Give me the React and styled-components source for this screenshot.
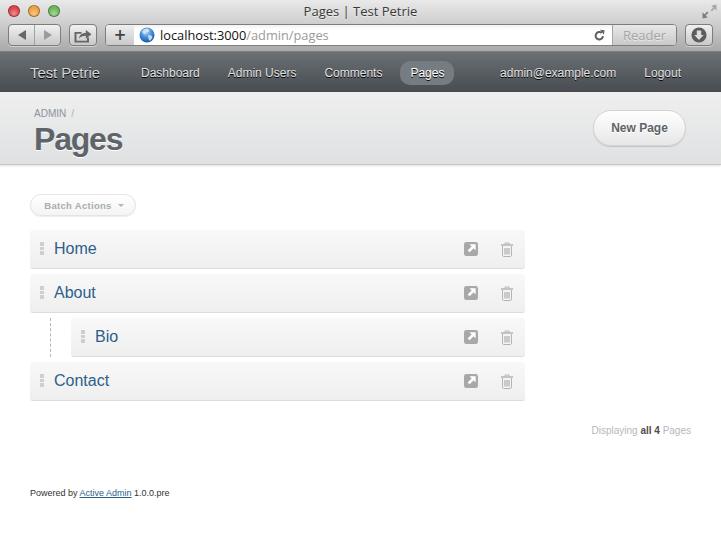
import React from "react";
import styled, { createGlobalStyle } from "styled-components";

const GlobalStyle = createGlobalStyle`
    html, body {
        margin: 0;
        padding: 0;
        background: #fff;
        font-family: "Liberation Sans", Arial, sans-serif;
    }
`;

const pages = [
    { title: "Home", nested: false },
    { title: "About", nested: false },
    { title: "Bio", nested: true },
    { title: "Contact", nested: false },
];

const ShareIcon = () => (
    <svg width="20" height="15" viewBox="0 0 20 15">
        <path d="M1.500 4h7v1.800h-5v7h10.500V9.500h2V14.500H1.500z" fill="#666" />
        <path d="M6 10.500c.3-3.600 2.800-5.500 6.800-5.600V2l5.700 4.300-5.700 4.400V7.800c-3 0-5 .8-6.800 2.700z" fill="#666" />
    </svg>
);

const Globe = () => (
    <svg width="16" height="16" viewBox="0 0 16 16">
        <defs>
            <radialGradient id="globe" cx="45%" cy="30%" r="75%">
                <stop offset="0" stopColor="#a8d4f7" />
                <stop offset="0.55" stopColor="#3a87d6" />
                <stop offset="1" stopColor="#124f9e" />
            </radialGradient>
        </defs>
        <circle cx="8" cy="8" r="7.500" fill="url(#globe)" />
        <path d="M5 2.500l3-1 2.500 1.500-1 2-2.500.5-.5 2-2.500-1-1-2zM9 8l3.500.5 1 2-2.500 3.500-1.500-2z" fill="#dfe8ee" opacity="0.85" />
    </svg>
);

const ReloadIcon = () => (
    <svg width="13" height="13" viewBox="0 0 13 13">
        <path d="M10 7.200a3.700 3.700 0 1 1-1.300-3.300" fill="none" stroke="#606060" strokeWidth="2" />
        <path d="M7 .8l4.500.4-.5 4.600z" fill="#606060" />
    </svg>
);

const DownloadIcon = () => (
    <svg width="16" height="16" viewBox="0 0 18 18">
        <circle cx="9" cy="9" r="8.500" fill="#5c5c5c" />
        <path d="M6.500 4h5v5h2.800L9 14.500 3.700 9h2.800z" fill="#dcdcdc" />
    </svg>
);

const FullscreenIcon = () => (
    <svg width="15" height="15" viewBox="0 0 15 15">
        <path d="M14.500 .5v6.200l-2-2-2.700 2.700-1.200-1.200 2.700-2.700-2-2z" fill="#a8a8a8" />
        <path d="M.5 14.500V8.300l2 2 2.700-2.700 1.200 1.200-2.700 2.700 2 2z" fill="#7f7f7f" />
    </svg>
);

const ViewIcon = () => (
    <svg width="14" height="14" viewBox="0 0 15 15">
        <rect width="15" height="15" rx="2.500" fill="#a8a8a8" />
        <path d="M12.500 2.500V9l-2.200-2.200-4.300 4.300-2.100-2.100 4.300-4.300L6 2.500z" fill="#fff" />
    </svg>
);

const TrashIcon = () => (
    <svg width="14" height="15" viewBox="0 0 14 15">
        <path d="M5 2.500V1h4v1.500" fill="none" stroke="#b4b4b4" />
        <path d="M1 3h12" stroke="#b4b4b4" strokeWidth="1.500" />
        <path d="M2.500 4v9.200c0 .7.500 1.300 1.200 1.300h6.600c.7 0 1.200-.6 1.200-1.300V4" fill="#f4f4f4" stroke="#b4b4b4" />
        <path d="M5 6v6.500M7 6v6.500M9 6v6.500" stroke="#adadad" strokeWidth="1.200" />
    </svg>
);

const App = () => {
    return (
        <>
            <GlobalStyle />
            <Page>
                <Chrome>
                    <TitleRow>
                        <Lights>
                            <Light $color="#e0444a" />
                            <Light $color="#eea33f" />
                            <Light $color="#6cb85a" />
                        </Lights>
                        <WindowTitle>Pages | Test Petrie</WindowTitle>
                        <FullscreenSlot>
                            <FullscreenIcon />
                        </FullscreenSlot>
                    </TitleRow>
                    <ToolRow>
                        <ToolButton $width={53}>
                            <Arrow $dir="left" />
                            <ToolDivider />
                            <Arrow $dir="right" $dim />
                        </ToolButton>
                        <ToolButton $width={28}>
                            <ShareIcon />
                        </ToolButton>
                        <AddressBar>
                            <PlusCell>+</PlusCell>
                            <UrlField>
                                <Globe />
                                <Url>
                                    localhost:3000<UrlPath>/admin/pages</UrlPath>
                                </Url>
                                <ReloadSlot>
                                    <ReloadIcon />
                                </ReloadSlot>
                            </UrlField>
                            <ReaderCell>Reader</ReaderCell>
                        </AddressBar>
                        <ToolButton $width={28}>
                            <DownloadIcon />
                        </ToolButton>
                    </ToolRow>
                </Chrome>

                <NavBar>
                    <SiteTitle>Test Petrie</SiteTitle>
                    <NavLinks>
                        <NavLink>Dashboard</NavLink>
                        <NavLink>Admin Users</NavLink>
                        <NavLink>Comments</NavLink>
                        <NavLink $active>Pages</NavLink>
                    </NavLinks>
                    <NavRight>
                        <NavLink>admin@example.com</NavLink>
                        <NavLink>Logout</NavLink>
                    </NavRight>
                </NavBar>

                <TitleBar>
                    <TitleText>
                        <Breadcrumb>
                            ADMIN<Slash>/</Slash>
                        </Breadcrumb>
                        <PageTitle>Pages</PageTitle>
                    </TitleText>
                    <NewPage>New Page</NewPage>
                </TitleBar>

                <Content>
                    <BatchButton>
                        Batch Actions
                        <Caret />
                    </BatchButton>
                    <Tree>
                        {pages.map((p) => (
                            <TreeRow key={p.title} $nested={p.nested}>
                                {p.nested && <Dashed />}
                                <Item>
                                    <Handle>
                                        <Dot />
                                        <Dot />
                                        <Dot />
                                    </Handle>
                                    <ItemLabel>{p.title}</ItemLabel>
                                    <ItemActions>
                                        <ViewIcon />
                                        <TrashIcon />
                                    </ItemActions>
                                </Item>
                            </TreeRow>
                        ))}
                    </Tree>
                    <Pagination>
                        Displaying <b>all 4</b> Pages
                    </Pagination>
                </Content>

                <Footer>
                    Powered by <FooterLink href="#">Active Admin</FooterLink> 1.0.0.pre
                </Footer>
            </Page>
        </>
    );
};
export default App;

const Page = styled.div`
    width: 721px;
    height: 545px;
    overflow: hidden;
    background: #fff;
`;

const Chrome = styled.div`
    height: 52px;
    box-sizing: border-box;
    background: linear-gradient(#e9e9e9 0%, #d2d2d2 40%, #a9a9a9 100%);
    border-bottom: 1px solid #7f7f7f;
`;

const TitleRow = styled.div`
    height: 22px;
    display: grid;
    grid-template-columns: 1fr auto 1fr;
    align-items: center;
`;

const Lights = styled.div`
    display: flex;
    gap: 8px;
    padding-left: 8px;
`;

const Light = styled.span`
    width: 12px;
    height: 12px;
    border-radius: 50%;
    box-sizing: border-box;
    border: 1px solid rgba(0, 0, 0, 0.35);
    background: radial-gradient(circle at 50% 75%, #fff6 0%, transparent 60%), ${(p) => p.$color};
`;

const WindowTitle = styled.div`
    font-family: "Open Sans", "Noto Sans", sans-serif;
    font-size: 13px;
    color: #3a3a3a;
    text-shadow: 0 1px 0 rgba(255, 255, 255, 0.5);
`;

const FullscreenSlot = styled.div`
    display: flex;
    justify-content: flex-end;
    padding-right: 4px;
`;

const ToolRow = styled.div`
    height: 24px;
    display: flex;
    gap: 8px;
    padding: 2px 8px 0;
`;

const ToolButton = styled.div`
    width: ${(p) => p.$width}px;
    height: 22px;
    flex: none;
    display: flex;
    align-items: center;
    justify-content: center;
    box-sizing: border-box;
    border: 1px solid #7d7d7d;
    border-radius: 4px;
    background: linear-gradient(#f0f0f0, #c9c9c9);
    box-shadow: 0 1px 0 rgba(255, 255, 255, 0.4);
`;

const Arrow = styled.span`
    flex: 1;
    display: flex;
    justify-content: center;
    &::before {
        content: "";
        border-top: 5px solid transparent;
        border-bottom: 5px solid transparent;
        ${(p) => (p.$dir === "left" ? "border-right" : "border-left")}: 8px solid ${(p) => (p.$dim ? "#9b9b9b" : "#666")};
    }
`;

const ToolDivider = styled.span`
    width: 1px;
    height: 100%;
    background: #a2a2a2;
`;

const AddressBar = styled.div`
    flex: 1;
    height: 22px;
    display: flex;
    box-sizing: border-box;
    border: 1px solid #7d7d7d;
    border-radius: 4px;
    overflow: hidden;
    background: #fff;
`;

const PlusCell = styled.div`
    width: 28px;
    flex: none;
    display: flex;
    align-items: center;
    justify-content: center;
    background: linear-gradient(#f0f0f0, #c9c9c9);
    font-family: "DejaVu Sans", sans-serif;
    font-weight: 700;
    font-size: 15px;
    line-height: 1;
    color: #444;
`;

const UrlField = styled.div`
    flex: 1;
    display: flex;
    align-items: center;
    gap: 5px;
    padding: 0 5px 0 5px;
    background: linear-gradient(#f2f2f2, #fff 25%);
`;

const Url = styled.span`
    flex: 1;
    font-family: "Open Sans", "Noto Sans", sans-serif;
    font-size: 12.800px;
    color: #111;
`;

const UrlPath = styled.span`
    color: #9a9a9a;
`;

const ReloadSlot = styled.span`
    display: flex;
    padding-right: 1px;
`;

const ReaderCell = styled.div`
    width: 64px;
    flex: none;
    display: flex;
    align-items: center;
    justify-content: center;
    box-sizing: border-box;
    border-left: 1px solid #a5a5a5;
    background: linear-gradient(#e8e8e8, #c9c9c9);
    font-family: "Open Sans", "Noto Sans", sans-serif;
    font-size: 13px;
    color: #a5a5a5;
    text-shadow: 0 1px 0 rgba(255, 255, 255, 0.5);
`;

const NavBar = styled.div`
    height: 40px;
    display: flex;
    align-items: center;
    box-sizing: border-box;
    padding: 2px 26px 0 30px;
    background: linear-gradient(#6a7074, #484c50);
    text-shadow: 0 1px 0 #000;
`;

const SiteTitle = styled.div`
    font-size: 14.800px;
    color: #d4d6d7;
    width: 97px;
`;

const NavLinks = styled.div`
    display: flex;
    align-items: center;
    flex: 1;
`;

const NavRight = styled.div`
    display: flex;
    align-items: center;
`;

const NavLink = styled.span`
    height: 24px;
    display: flex;
    align-items: center;
    padding: 0 10px;
    margin: 0 4px;
    border-radius: 10px;
    font-size: 12px;
    color: ${(p) => (p.$active ? "#fff" : "#e2e3e4")};
    background: ${(p) => (p.$active ? "#767d82" : "transparent")};
`;

const TitleBar = styled.div`
    height: 73px;
    box-sizing: border-box;
    padding: 0 35px 0 34px;
    display: flex;
    align-items: center;
    justify-content: space-between;
    background: linear-gradient(#efefef, #dfe1e2);
    border-bottom: 1px solid #c8c8c8;
    box-shadow: 0 1px 2px rgba(0, 0, 0, 0.12);
`;

const TitleText = styled.div`
    margin-top: 7px;
`;

const Breadcrumb = styled.div`
    font-size: 10px;
    line-height: 12px;
    color: #8a929b;
    margin-top: 2px;
`;

const Slash = styled.span`
    margin-left: 5px;
    color: #aab0b6;
`;

const PageTitle = styled.h1`
    margin: 1px 0 0;
    font-size: 32px;
    line-height: 36px;
    font-weight: 700;
    letter-spacing: -1.200px;
    color: #5e6469;
    text-shadow: 0 1px 0 #fff;
`;

const NewPage = styled.div`
    width: 93px;
    height: 36px;
    display: flex;
    align-items: center;
    justify-content: center;
    box-sizing: border-box;
    border: 1px solid #d3d3d3;
    border-radius: 18px;
    background: linear-gradient(#fff, #e7e7e7);
    box-shadow: 0 1px 1px rgba(0, 0, 0, 0.15);
    font-size: 12px;
    font-weight: 700;
    color: #5e6469;
    text-shadow: 0 1px 0 #fff;
`;

const Content = styled.div`
    padding: 29px 30px 0;
`;

const BatchButton = styled.div`
    width: 106px;
    height: 22px;
    display: flex;
    align-items: center;
    justify-content: center;
    gap: 6px;
    box-sizing: border-box;
    border: 1px solid #e4e4e4;
    border-radius: 11px;
    padding-left: 2px;
    background: linear-gradient(#fff, #f4f4f4);
    box-shadow: 0 1px 1px rgba(0, 0, 0, 0.07);
    font-size: 9.500px;
    font-weight: 700;
    letter-spacing: 0.300px;
    color: #a9adb1;
`;

const Caret = styled.span`
    border-left: 3px solid transparent;
    border-right: 3px solid transparent;
    border-top: 3px solid #b6b6b6;
`;

const Tree = styled.div`
    width: 495px;
    margin-top: 14px;
    display: flex;
    flex-direction: column;
    gap: 5px;
`;

const TreeRow = styled.div`
    display: flex;
    padding-left: ${(p) => (p.$nested ? "20px" : "0")};
    gap: 20px;
`;

const Dashed = styled.span`
    width: 0;
    height: 39px;
    border-left: 1px dashed #b5b5b5;
`;

const Item = styled.div`
    flex: 1;
    height: 39px;
    display: flex;
    align-items: center;
    box-sizing: border-box;
    padding: 0 11px 0 10px;
    border-radius: 3px;
    background: linear-gradient(#f8f8f8, #efefef);
    border-bottom: 1px solid #dcdcdc;
`;

const Handle = styled.span`
    display: flex;
    flex-direction: column;
    gap: 1px;
    margin-bottom: 1px;
`;

const Dot = styled.span`
    width: 4px;
    height: 3.500px;
    background: #cfcfcf;
`;

const ItemLabel = styled.span`
    flex: 1;
    margin: 0 0 0 10px;
    font-size: 16px;
    color: #2d5f8b;
`;

const ItemActions = styled.span`
    display: flex;
    align-items: center;
    gap: 22px;
`;

const Pagination = styled.div`
    margin-top: 23px;
    text-align: right;
    font-size: 10px;
    line-height: 13px;
    color: #b3b8bd;
    b {
        color: #4d4d4d;
    }
`;

const Footer = styled.div`
    margin-top: 50px;
    padding: 0 30px;
    font-size: 9px;
    line-height: 12px;
    color: #333;
`;

const FooterLink = styled.a`
    color: #2d5f8b;
    text-decoration: underline;
`;
